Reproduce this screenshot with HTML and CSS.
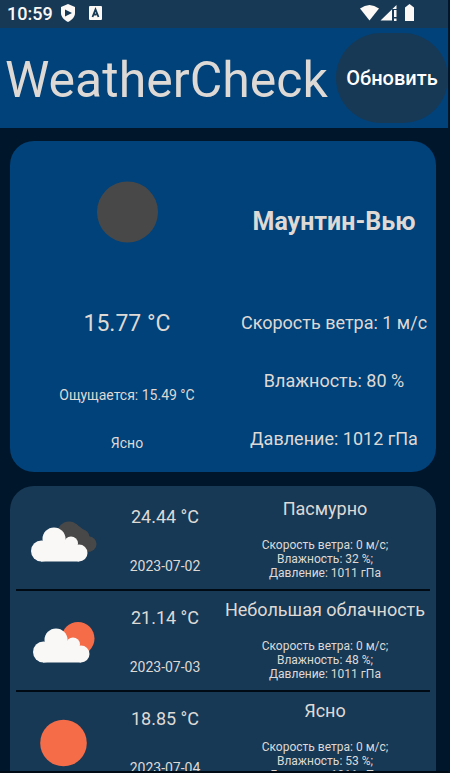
FILE: index.html
```
<!DOCTYPE html>
<html lang="ru">
<head>
<meta charset="utf-8">
<meta name="viewport" content="width=device-width, initial-scale=1">
<title>WeatherCheck</title>
<link rel="stylesheet" href="styles.css">
</head>
<body>
<div class="app">
  <div class="status">
    <span class="clock">10:59</span>
    <svg class="shield" width="16" height="20" viewBox="0 0 16 20" aria-hidden="true"><path fill="#fbf8f5" d="M8 1l7 3v6c0 4-3 7-7 9-4-2-7-5-7-9V4z"/><path fill="#173955" d="M5 6.500l7 3.500-7 3.500z"/></svg>
    <svg class="badge" width="13" height="15" viewBox="0 0 13 15" aria-hidden="true"><rect width="13" height="14" rx="1" fill="#fbf8f5"/><path fill="none" stroke="#173955" stroke-width="1.800" d="M3.500 11L6.500 3.500l3 7.500M4.500 8.500h3"/></svg>
    <svg class="signals" width="56" height="18" viewBox="0 0 56 18" aria-hidden="true"><path fill="#fbf8f5" d="M0 4.500Q9.500-2.500 19 4.500L9.500 16.500z"/><path fill="#fbf8f5" d="M20.500 16.500L36.500 1v4H32v11.500z"/><path fill="#fbf8f5" d="M34 6h2.500v7H34zM34 14.500h2.500V17H34z"/><path fill="#fbf8f5" d="M45 3.500L49.500 0 54 3.500V17H45z"/></svg>
  </div>
  <header class="header">
    <h1 class="title">WeatherCheck</h1>
    <button class="refresh" type="button">Обновить</button>
  </header>
  <main class="content">
    <section class="card current">
      <div class="summary">
        <div class="sky"><svg width="62" height="62" viewBox="0 0 62 62" aria-hidden="true"><circle cx="31.500" cy="31" r="30.500" fill="#484848"/></svg></div>
        <div class="now">15.77 °C</div>
        <div class="feels">Ощущается: 15.49 °C</div>
        <div class="clear">Ясно</div>
      </div>
      <div class="facts">
        <h2 class="city">Маунтин-Вью</h2>
        <div>Скорость ветра: 1 м/с</div>
        <div>Влажность: 80 %</div>
        <div>Давление: 1012 гПа</div>
      </div>
    </section>
    <ul class="card forecast">
      <li class="day">
        <svg class="icon" viewBox="0 0 96 99" aria-hidden="true"><g fill="#484848"><circle cx="53" cy="43" r="11.500"/><circle cx="66" cy="47" r="7.500"/><circle cx="73" cy="54" r="7.500"/><path d="M60 34l8 6 6 7 1 14.500-23 1-6-18z"/></g><g fill="#faf8f6"><circle cx="25.500" cy="61" r="10.500"/><circle cx="38" cy="49" r="11.500"/><circle cx="55" cy="53.500" r="7"/><circle cx="63" cy="63" r="8.500"/><path d="M25 52l12-2 18 5 8 8v8.500H25z"/></g></svg>
        <div class="reading"><span class="temp">24.44 °C</span><time datetime="2023-07-02">2023-07-02</time></div>
        <div class="detail"><h3>Пасмурно</h3><p>Скорость ветра: 0 м/с;<br>Влажность: 32 %;<br>Давление: 1011 гПа</p></div>
      </li>
      <li class="day">
        <svg class="icon" viewBox="0 0 96 99" aria-hidden="true"><circle cx="62" cy="47.500" r="16.500" fill="#f46c48"/><g fill="#faf8f6" transform="translate(2 0)"><circle cx="25.500" cy="61" r="10.500"/><circle cx="38" cy="49" r="11.500"/><circle cx="55" cy="53.500" r="7"/><circle cx="63" cy="63" r="8.500"/><path d="M25 52l12-2 18 5 8 8v8.500H25z"/></g></svg>
        <div class="reading"><span class="temp">21.14 °C</span><time datetime="2023-07-03">2023-07-03</time></div>
        <div class="detail"><h3>Небольшая облачность</h3><p>Скорость ветра: 0 м/с;<br>Влажность: 48 %;<br>Давление: 1011 гПа</p></div>
      </li>
      <li class="day">
        <svg class="icon" viewBox="0 0 96 99" aria-hidden="true"><circle cx="47.500" cy="51" r="23.300" fill="#f46c48"/></svg>
        <div class="reading"><span class="temp">18.85 °C</span><time datetime="2023-07-04">2023-07-04</time></div>
        <div class="detail"><h3>Ясно</h3><p>Скорость ветра: 0 м/с;<br>Влажность: 53 %;<br>Давление: 1011 гПа</p></div>
      </li>
    </ul>
  </main>
</div>
</body>
</html>
```
FILE: styles.css
```
* { box-sizing: border-box; }
body { margin: 0; background: #00162b; color: #ded9d5; font-family: Roboto, sans-serif; }
h1, h2, h3, p, ul { margin: 0; padding: 0; font-weight: 400; }
.app {
  display: flex;
  flex-direction: column;
  height: 100vh;
  overflow: hidden;
  border-right: 2px solid #00162b;
  border-bottom: 2px solid #000b16;
}
.status {
  display: flex;
  align-items: center;
  flex: none;
  height: 28px;
  padding: 0 32px 2px 7px;
  background: #173955;
}
.clock { color: #fbf8f5; font-size: 18px; font-weight: 500; }
.shield { margin-left: 7px; }
.badge { margin-left: 13px; }
.signals { margin-left: auto; }
.header {
  display: flex;
  align-items: center;
  justify-content: space-between;
  flex: none;
  height: 100px;
  padding: 0 0 0 5px;
  background: #004279;
}
.title { padding-top: 4px; font-size: 50px; line-height: 60px; }
.refresh {
  flex: none;
  width: 112px;
  height: 90px;
  padding: 0;
  border: 0;
  border-radius: 45px;
  background: #173955;
  color: #fff;
  font: 500 20px Roboto, sans-serif;
}
.content {
  flex: 1;
  min-height: 0;
  overflow: hidden;
  padding: 13px 12px 0 10px;
}
.card { border-radius: 24px; }
.current {
  display: grid;
  grid-template-columns: 210fr 204fr;
  padding: 0 0 5px 12px;
  background: #004279;
}
.summary, .facts { display: grid; justify-items: center; align-items: center; white-space: nowrap; }
.summary { grid-template-rows: 142px 80px 64px 32px; align-content: start; }
.facts { grid-template-rows: 144px 58px 58px 58px; padding-top: 8px; font-size: 18px; }
.sky { display: flex; }
.now { font-size: 23px; }
.feels, .clear { font-size: 14px; }
.city { font-size: 25px; font-weight: 700; }
.forecast {
  margin-top: 14px;
  padding: 4px 6px;
  background: #173955;
  list-style: none;
}
.day {
  display: grid;
  grid-template-columns: 96fr 106fr 212fr;
  height: 101px;
  border-bottom: 2px solid #000a14;
}
.icon { width: 100%; height: 99px; }
.reading { display: flex; flex-direction: column; align-items: center; justify-content: space-around; }
.temp { font-size: 18px; }
time { font-size: 14px; }
.detail { padding: 7px 0 0 2px; text-align: center; white-space: nowrap; }
.detail h3 { font-size: 18px; line-height: 24px; }
.detail p { margin-top: 17px; font-size: 12px; line-height: 14px; }
```
